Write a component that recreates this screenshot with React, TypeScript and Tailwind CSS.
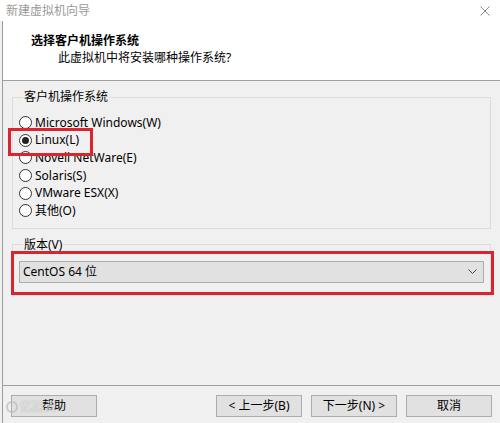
import React from "react";

const FONT = { fontFamily: '"Noto Sans", "Noto Sans CJK SC", sans-serif' };

function Radio({ label, checked }: { label: string; checked?: boolean }) {
  return (
    <div className="flex items-center h-[17.6px]">
      <span className="w-[13px] h-[13px] rounded-full border border-[#333333] bg-white flex items-center justify-center mr-[3px]">
        {checked && <span className="w-[7px] h-[7px] rounded-full bg-[#222222]" />}
      </span>
      <span className="text-[12px] leading-[16px] text-black">{label}</span>
    </div>
  );
}

function Btn({ children }: { children: React.ReactNode }) {
  return (
    <div className="w-[86px] h-[22px] bg-[#e1e1e1] border border-[#adadad] flex items-center justify-center text-[12px] text-black">
      {children}
    </div>
  );
}

export default function App() {
  return (
    <div className="w-[500px] h-[423px] bg-[#f0f0f0] relative overflow-hidden flex flex-col" style={FONT}>
      {/* title bar */}
      <div className="h-[21px] bg-white flex items-center justify-between pl-[6px] pr-[10px]">
        <span className="text-[12px] text-[#999999]">新建虚拟机向导</span>
        <svg width="10" height="10" viewBox="0 0 10 10">
          <path d="M0.5 0.5 L9.5 9.5 M9.5 0.5 L0.5 9.5" stroke="#8a8a8a" strokeWidth="1" />
        </svg>
      </div>
      <div className="flex-1 flex flex-col ml-[2px] border-l border-[#9c9c9c]">
        {/* header */}
        <div className="h-[60px] bg-white border-b border-[#a0a0a0] pt-[12px]">
          <div className="pl-[28px] text-[12px] leading-[16px] font-bold text-black">选择客户机操作系统</div>
          <div className="pl-[55px] mt-[1px] text-[12px] leading-[16px] text-black">此虚拟机中将安装哪种操作系统?</div>
        </div>
        {/* content */}
        <div className="flex-1 border-b border-[#a0a0a0] pt-[8px] px-[9px]">
          <fieldset className="border border-[#dcdcdc] pl-[6px] pt-[9px] pb-[8px]">
            <legend className="ml-[4px] px-[1px] text-[12px] leading-[16px] text-black">客户机操作系统</legend>
            <Radio label="Microsoft Windows(W)" />
            <Radio label="Linux(L)" checked />
            <Radio label="Novell NetWare(E)" />
            <Radio label="Solaris(S)" />
            <Radio label="VMware ESX(X)" />
            <Radio label="其他(O)" />
          </fieldset>
          <fieldset className="mt-[8px] border border-[#dcdcdc] px-[6px] pt-[8px] pb-[12px]">
            <legend className="ml-[4px] px-[1px] text-[12px] leading-[16px] text-black">版本(V)</legend>
            <div className="h-[22px] bg-[#e1e1e1] border border-[#adadad] flex items-center justify-between pl-[3px] pr-[6px]">
              <span className="text-[12px] text-black">CentOS 64 位</span>
              <svg width="9" height="6" viewBox="0 0 9 6">
                <path d="M0.5 0.5 L4.5 4.5 L8.5 0.5" fill="none" stroke="#444444" strokeWidth="1" />
              </svg>
            </div>
          </fieldset>
        </div>
        {/* buttons */}
        <div className="h-[37px] flex items-start pt-[9px] pl-[8px] pr-[8px]">
          <Btn>帮助</Btn>
          <div className="flex-1" />
          <div className="flex gap-[9px]">
            <Btn>&lt; 上一步(B)</Btn>
            <Btn>下一步(N) &gt;</Btn>
            <Btn>取消</Btn>
          </div>
        </div>
      </div>
      {/* annotation overlays */}
      <div className="absolute left-[8px] top-[128px] w-[85px] h-[28px] border-[3px] border-[#d9252f]" />
      <div className="absolute left-[11px] top-[251px] w-[483px] h-[44px] border-[3px] border-[#d9252f]" />
      {/* watermark */}
      <div className="absolute left-[6px] top-[398px] flex items-center gap-[2px] text-[12px] font-bold text-white/70 opacity-70" style={{ textShadow: "0 0 1px #888" }}>
        <span className="w-[12px] h-[12px] rounded-full border-2 border-[#bbbbbb]" />
        <span>亿速云</span>
      </div>
    </div>
  );
}
